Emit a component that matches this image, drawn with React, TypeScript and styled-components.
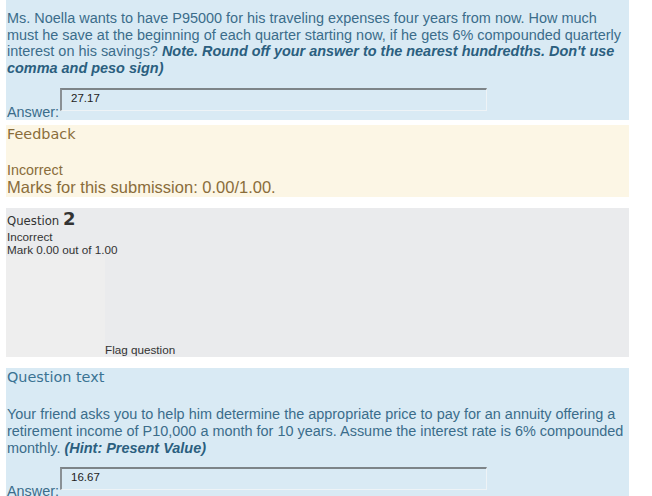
import styled, { createGlobalStyle } from "styled-components";

const GlobalStyle = createGlobalStyle`
  html, body {
    margin: 0;
    padding: 0;
    background: #ffffff;
  }
  body {
    font-family: "Liberation Sans", Arial, sans-serif;
    overflow: hidden;
  }
`;

const Page = styled.div`
  width: 623px;
  padding: 0 6px;
  display: flex;
  flex-direction: column;
`;

const Formulation = styled.div<{ $gapTop?: number; $padTop?: number }>`
  background-color: #d9eaf4;
  color: #3b6d8b;
  padding: ${(p) => p.$padTop ?? 1}px 1px 0 1px;
  margin-top: ${(p) => p.$gapTop ?? 0}px;
`;

const SectionHeading = styled.div<{ $tone: string; $gap: number }>`
  font-family: "DejaVu Sans", sans-serif;
  font-size: 14.4px;
  line-height: 17px;
  color: ${(p) => p.$tone};
  margin-bottom: ${(p) => p.$gap}px;
`;

const QText = styled.div`
  font-size: 14.45px;
  line-height: 16.6px;
  color: #3b6d8b;

  b {
    font-style: italic;
    color: #2b5f7f;
  }
`;

const AnswerRow = styled.div<{ $gapTop: number }>`
  display: flex;
  align-items: flex-end;
  margin-top: ${(p) => p.$gapTop}px;
`;

const AnswerLabel = styled.label`
  font-size: 14.4px;
  line-height: 15px;
  width: 53px;
  color: #3b6d8b;
`;

const AnswerInput = styled.div`
  width: 415px;
  height: 20px;
  margin-bottom: 9px;
  box-sizing: content-box;
  border-top: 2px solid #7d8488;
  border-left: 2px solid #8a9094;
  border-right: 1px solid #eef3f6;
  border-bottom: 1px solid #eef3f6;
  padding-left: 9px;
  font-size: 11.5px;
  line-height: 17px;
  color: #222;
`;

const Feedback = styled.div`
  margin-top: 5px;
  background-color: #fcf6e5;
  color: #8a6d3b;
  padding: 1px 1px 0 1px;
`;

const FeedbackSmall = styled.div`
  font-size: 14.3px;
  line-height: 16px;
`;

const FeedbackMarks = styled.div`
  font-size: 16.5px;
  line-height: 19px;
`;

const Info = styled.div`
  margin-top: 11px;
  height: 149px;
  background-color: #eaebed;
  color: #333;
  display: flex;
  flex-direction: column;
  padding: 1px 1px 0 1px;
  box-sizing: border-box;
`;

const QNo = styled.div`
  font-family: "DejaVu Sans", sans-serif;
  font-size: 11.7px;
  line-height: 20px;

  span {
    font-family: "DejaVu Sans", sans-serif;
    font-size: 18px;
    font-weight: bold;
  }
`;

const InfoLine = styled.div`
  font-size: 11.7px;
  line-height: 12.5px;
`;

const FlagRow = styled.div`
  margin-top: auto;
  display: flex;
  align-items: flex-end;
`;

const FlagSpacer = styled.div`
  width: 99px;
  height: 101px;
  margin-left: -1px;
  background-color: #eeeeee;
`;

const FlagLabel = styled.div`
  font-size: 11.7px;
  line-height: 14px;
`;

export default function App() {
  return (
    <>
      <GlobalStyle />
      <Page>
        <Formulation $padTop={10}>
          <QText>
            Ms. Noella wants to have P95000 for his traveling expenses four years
            from now. How much must he save at the beginning of each quarter
            starting now, if he gets 6% compounded quarterly interest on his
            savings?{" "}
            <b>
              Note. Round off your answer to the nearest hundredths. Don't use
              comma and peso sign)
            </b>
          </QText>
          <AnswerRow $gapTop={12}>
            <AnswerLabel>Answer:</AnswerLabel>
            <AnswerInput>27.17</AnswerInput>
          </AnswerRow>
        </Formulation>

        <Feedback>
          <SectionHeading $tone="#8a6d3b" $gap={19}>
            Feedback
          </SectionHeading>
          <FeedbackSmall>Incorrect</FeedbackSmall>
          <FeedbackMarks>Marks for this submission: 0.00/1.00.</FeedbackMarks>
        </Feedback>

        <Info>
          <QNo>
            Question <span>2</span>
          </QNo>
          <InfoLine>Incorrect</InfoLine>
          <InfoLine>Mark 0.00 out of 1.00</InfoLine>
          <FlagRow>
            <FlagSpacer />
            <FlagLabel>Flag question</FlagLabel>
          </FlagRow>
        </Info>

        <Formulation $gapTop={11}>
          <SectionHeading $tone="#3a7393" $gap={20}>
            Question text
          </SectionHeading>
          <QText>
            Your friend asks you to help him determine the appropriate price to
            pay for an annuity offering a retirement income of P10,000 a month
            for 10 years. Assume the interest rate is 6% compounded monthly.{" "}
            <b>(Hint: Present Value)</b>
          </QText>
          <AnswerRow $gapTop={11}>
            <AnswerLabel>Answer:</AnswerLabel>
            <AnswerInput>16.67</AnswerInput>
          </AnswerRow>
        </Formulation>
      </Page>
    </>
  );
}
